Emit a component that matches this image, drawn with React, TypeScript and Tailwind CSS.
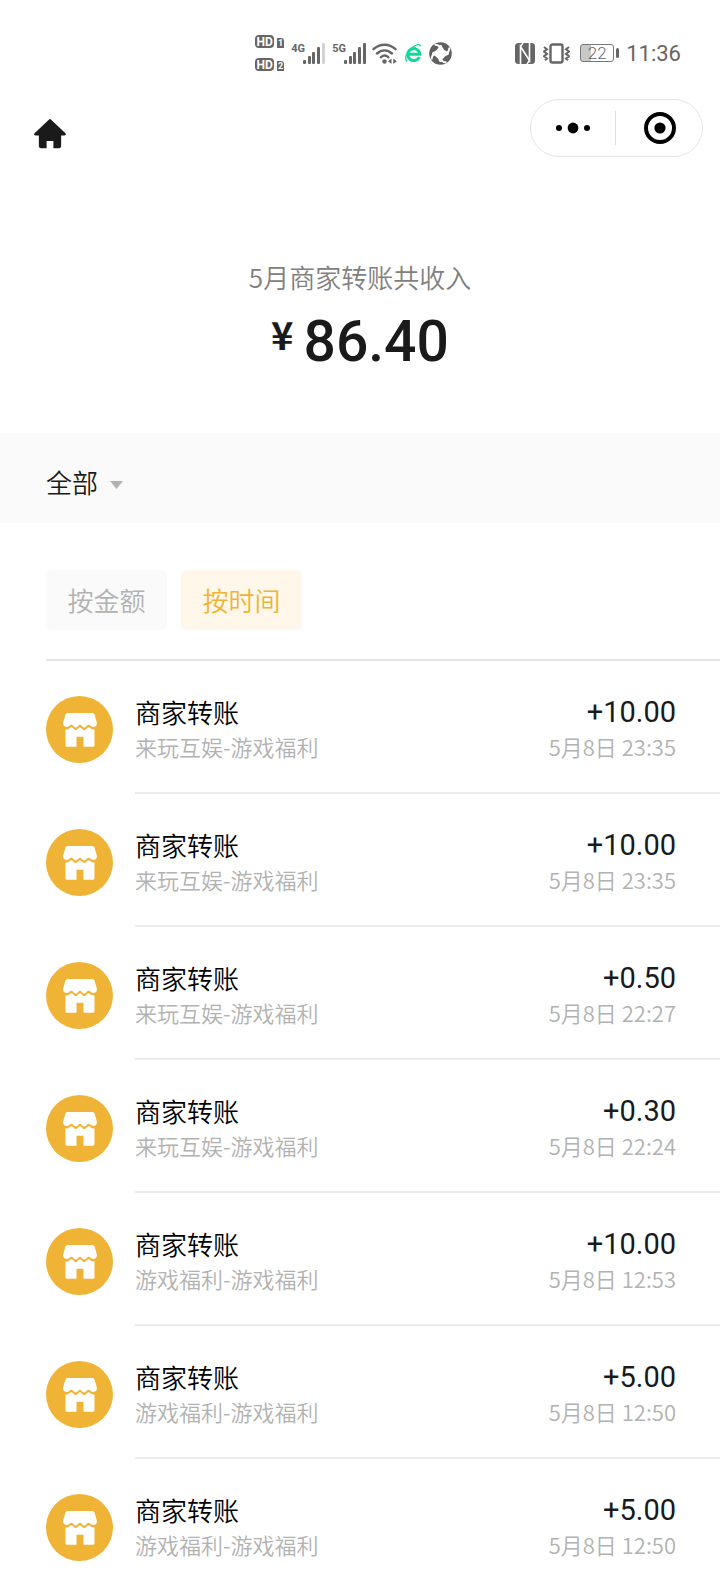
import React, { useState } from 'react';

interface Transfer {
  id: number;
  merchant: string;
  amount: string;
  time: string;
}

const transfers: Transfer[] = [
  { id: 1, merchant: '来玩互娱-游戏福利', amount: '+10.00', time: '5月8日 23:35' },
  { id: 2, merchant: '来玩互娱-游戏福利', amount: '+10.00', time: '5月8日 23:35' },
  { id: 3, merchant: '来玩互娱-游戏福利', amount: '+0.50', time: '5月8日 22:27' },
  { id: 4, merchant: '来玩互娱-游戏福利', amount: '+0.30', time: '5月8日 22:24' },
  { id: 5, merchant: '游戏福利-游戏福利', amount: '+10.00', time: '5月8日 12:53' },
  { id: 6, merchant: '游戏福利-游戏福利', amount: '+5.00', time: '5月8日 12:50' },
  { id: 7, merchant: '游戏福利-游戏福利', amount: '+5.00', time: '5月8日 12:50' },
];

function HdBadge({ sim }: { sim: string }) {
  return (
    <span className="flex items-end gap-[3px] font-['Roboto',sans-serif] font-bold text-white">
      <span className="flex h-[13px] w-[19px] items-center justify-center rounded-[4px] bg-[#666] text-[12px] leading-none">HD</span>
      <span className="flex h-[10px] w-[7px] items-center justify-center rounded-tr-[3px] bg-[#666] text-[9px] leading-none">{sim}</span>
    </span>
  );
}

function Signal({ label, weak = false }: { label: string; weak?: boolean }) {
  return (
    <span className="flex items-start">
      <span className="w-[12px] font-['Roboto',sans-serif] text-[11px] leading-[11px] font-bold">{label}</span>
      <svg width="22" height="21" viewBox="0 0 22 21" fill="currentColor">
        <rect x="0" y="17" width="3" height="4" rx="1" />
        <rect x="5" y="13" width="3" height="8" rx="1" />
        <rect x="9" y="9" width="3" height="12" rx="1" />
        <rect x="14" y="4" width="3" height="17" rx="1" />
        <rect x="19" y="0" width="3" height="21" rx="1" fill={weak ? '#d4d4d4' : 'currentColor'} />
      </svg>
    </span>
  );
}

function StatusBar() {
  return (
    <div className="flex h-[40px] items-center justify-end pr-[39px] text-[#666]">
      <div className="flex flex-col gap-[10px]">
        <HdBadge sim="1" />
        <HdBadge sim="2" />
      </div>
      <div className="ml-[7px] flex items-center gap-[7px]">
        <Signal label="4G" weak />
        <Signal label="5G" />
      </div>

      {/* Wifi with traffic arrows */}
      <svg className="ml-[6px]" width="25" height="21" viewBox="0 0 25 21" fill="none" stroke="currentColor" strokeWidth="2.4" strokeLinecap="round">
        <path d="M1.500 6.200C8 .2 17 .2 23.500 6.200" />
        <path d="M5 10.500c4.500-4.200 10.500-4.200 15 0" />
        <path d="M8.800 14.300c2.400-2.200 5.400-2.200 7.600 0" />
        <circle cx="12.500" cy="18.500" r="2.200" fill="currentColor" stroke="none" />
        <path d="M16 18.200l3.500-2.700v5.400zM24.800 18.200l-3.500-2.700v5.400z" fill="currentColor" stroke="none" />
      </svg>

      {/* Browser */}
      <svg className="ml-[7px]" width="18" height="20" viewBox="0 0 18 20" fill="none" stroke="#12d8a0">
        <path d="M15.300 14A6 6 0 1 1 15.800 11.200H5" strokeWidth="3" />
        <path d="M3 18.500C-.5 15 3.500 7.500 9 3.800 13 1.200 16.500 .6 16.300 3.500" strokeWidth="1.300" />
      </svg>

      {/* Aperture */}
      <svg className="ml-[7px]" width="23" height="23" viewBox="0 0 23 23">
        <circle cx="11.500" cy="11.500" r="11.300" fill="#606060" />
        <path d="M11.500 4.500Q13 9.500 18.500 11.500 13.500 13 11.500 18.500 10 13.500 4.500 11.500 9.500 10 11.500 4.500z" fill="#fff" stroke="#fff" strokeWidth="3" strokeLinejoin="round" />
        <path d="M11.500 5Q8.500 2.500 5.500 2.500M18 11.500Q20.500 8.500 20.500 5.500M11.500 18Q14.500 20.500 17.500 20.500M5 11.500Q2.500 14.500 2.500 17.500" fill="none" stroke="#fff" strokeWidth="2" />
      </svg>

      {/* NFC */}
      <svg className="ml-[63px]" width="20" height="21" viewBox="0 0 20 21">
        <rect width="20" height="21" rx="3.500" fill="#666" />
        <path d="M5.500 21V3.500l9 14V0" fill="none" stroke="#fff" strokeWidth="1.600" />
        <path d="M5.500 3.500L8 0M14.500 17.500L12 21" fill="none" stroke="#fff" strokeWidth="1.400" />
      </svg>

      {/* Vibrate */}
      <svg className="ml-[8px]" width="27" height="21" viewBox="0 0 27 21" fill="none" stroke="currentColor">
        <rect x="7.500" y="1.500" width="12" height="18" rx="2" strokeWidth="2.400" />
        <path d="M1 4l3 2.300-3 2.300 3 2.300-3 2.300 3 2.300-2 1.800M26 4l-3 2.300 3 2.300-3 2.300 3 2.300-3 2.300 2 1.800" strokeWidth="2" />
      </svg>

      {/* Battery */}
      <div className="ml-[10px] flex items-center gap-[2px]">
        <span className="flex h-[18px] w-[34px] items-center justify-center rounded-[3px] border border-[#777] bg-linear-to-r from-[#c8c8c8] from-30% to-white to-30% font-['Roboto',sans-serif] text-[17px] leading-none">
          22
        </span>
        <span className="h-[10px] w-[3px] rounded-sm bg-[#666]" />
      </div>
      <time className="ml-[7px] pt-px font-['Roboto',sans-serif] text-[22px] leading-none font-normal">11:36</time>
    </div>
  );
}

function StoreIcon() {
  return (
    <span className="mt-[35px] flex size-[67px] shrink-0 items-center justify-center rounded-full bg-[#efb336]">
      <svg width="34" height="34" viewBox="0 0 34 34" fill="#fff">
        <path d="M5 0h24c1.400 0 2.200.6 2.600 1.800L34 10c0 2.500-1.500 4-3.700 4-2 0-3-2.300-4.800-2.300S23 14.600 21.200 14.600 18.800 11.700 17 11.700s-2.400 2.900-4.200 2.900S10.300 11.700 8.500 11.700 5.700 14 3.700 14C1.500 14 0 12.500 0 10l2.400-8.200C2.800.6 3.600 0 5 0z" />
        <path d="M2.500 16.500c3.500.3 4.300-2.300 6-2.300s2.500 2.900 4.300 2.900 2.400-2.900 4.200-2.900 2.400 2.900 4.200 2.900 2.600-2.900 4.300-2.900 2.500 2.600 6 2.300V32c0 1.200-.6 1.800-1.800 1.800H20.500v-10h-7v10H4.300c-1.200 0-1.800-.6-1.800-1.800z" />
      </svg>
    </span>
  );
}

function TransferRow({ transfer }: { transfer: Transfer }) {
  return (
    <li className="group flex items-start pl-[46px]">
      <StoreIcon />
      <div className="ml-[22px] flex flex-1 justify-between border-b-2 border-[#ececec] pt-[34px] pr-[44px] pb-[29px] group-last:border-0 group-last:pb-4">
        <div>
          <p className="text-[26px] leading-[34px] text-black">商家转账</p>
          <p className="text-[22px] leading-[34px] text-[#b2b2b2]">{transfer.merchant}</p>
        </div>
        <div className="text-right">
          <p className="font-['Roboto',sans-serif] text-[29px] leading-[34px] font-normal text-[#1a1a1a]">{transfer.amount}</p>
          <p className="text-[22px] leading-[34px] text-[#b2b2b2]">{transfer.time}</p>
        </div>
      </div>
    </li>
  );
}

export default function App() {
  const [sortBy, setSortBy] = useState<'amount' | 'time'>('time');

  const tabClass = (active: boolean) =>
    `h-[60px] w-[121px] rounded-md pb-[2px] text-[26px] ${active ? 'bg-[#fef7ea] text-[#efb336]' : 'bg-[#fafafa] text-[#b2b2b2]'}`;

  return (
    <div className="w-full bg-white pt-[33px] font-['Noto_Sans_CJK_SC',sans-serif] font-[350]">
      <StatusBar />

      {/* Navigation */}
      <header className="mt-[26px] flex items-center justify-between pr-[17px] pl-[34px]">
        <button aria-label="home" className="pt-[12px]">
          <svg width="32" height="30" viewBox="0 0 33 31" fill="#1a1a1a">
            <path d="M15.300.7c.8-.8 1.600-.8 2.400 0l14.500 13.700c1.200 1.200.8 2.600-.8 2.600H28v11c0 1.500-.7 2.200-2.200 2.200H20V22.800h-7v7.400H7.200C5.700 30.200 5 29.500 5 28V17H1.600C0 17-.4 15.600.8 14.400z" />
          </svg>
        </button>
        <div className="flex h-[58px] w-[173px] items-center rounded-full border border-[#e6e6e6]">
          <button aria-label="more" className="flex flex-1 justify-center">
            <svg width="34" height="12" viewBox="0 0 34 12" fill="#000">
              <circle cx="3" cy="6" r="3" />
              <circle cx="17" cy="6" r="5.400" />
              <circle cx="31" cy="6" r="3" />
            </svg>
          </button>
          <span className="h-[34px] w-px bg-[#dedede]" />
          <button aria-label="close" className="flex flex-1 justify-center pl-[3px]">
            <svg width="32" height="32" viewBox="0 0 32 32">
              <circle cx="16" cy="16" r="14" fill="none" stroke="#000" strokeWidth="4" />
              <circle cx="16" cy="16" r="5.600" />
            </svg>
          </button>
        </div>
      </header>

      {/* Monthly total */}
      <section className="flex h-[276px] flex-col items-center pt-[100px]">
        <h1 className="text-[26px] leading-[40px] text-[#808080]">5月商家转账共收入</h1>
        <p className="mt-[2px] flex items-start gap-[10px] font-medium text-[#1a1a1a]">
          <span className="text-[38px] leading-[70px] font-bold">¥</span>
          <span className="font-['Roboto',sans-serif] text-[57px] leading-[86px]">86.40</span>
        </p>
      </section>

      <div className="flex h-[90px] items-center bg-[#fafafa] pt-[6px] pl-[46px]">
        <label className="flex items-center gap-[11px]">
          <select aria-label="类型" className="appearance-none bg-transparent text-[26px] text-[#1a1a1a]">
            <option>全部</option>
          </select>
          <svg className="mt-[8px]" width="13" height="8" viewBox="0 0 13 8" fill="#b2b2b2">
            <path d="M0 0h13L6.500 8z" />
          </svg>
        </label>
      </div>

      <div className="pl-[46px]">
        <div className="flex gap-[14px] border-b-2 border-[#e5e5e5] pt-[47px] pb-[29px]">
          <button className={tabClass(sortBy === 'amount')} onClick={() => setSortBy('amount')}>
            按金额
          </button>
          <button className={tabClass(sortBy === 'time')} onClick={() => setSortBy('time')}>
            按时间
          </button>
        </div>
      </div>

      <ul>
        {transfers.map((t) => (
          <TransferRow key={t.id} transfer={t} />
        ))}
      </ul>
    </div>
  );
}
